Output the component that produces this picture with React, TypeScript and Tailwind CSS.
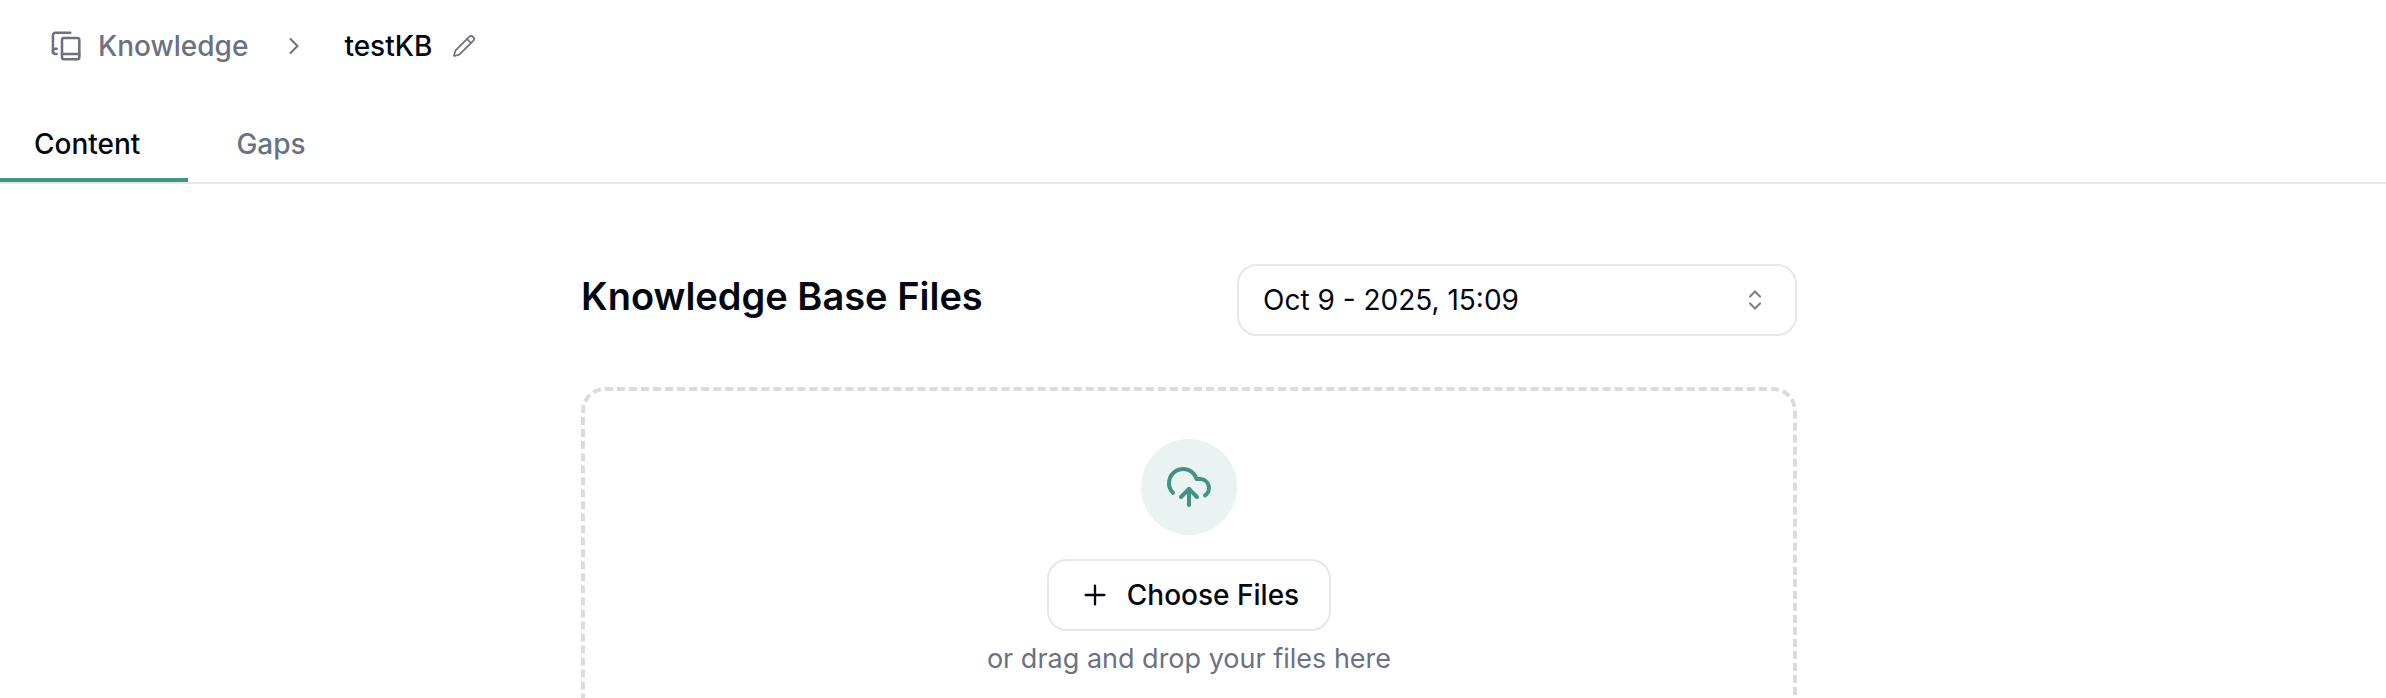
import { useState } from 'react'
import { ChevronRight, CloudUpload, Pencil, Plus } from 'lucide-react'
import clsx from 'clsx'

const TABS = ['Content', 'Gaps']
const VERSIONS = ['Oct 9 - 2025, 15:09']

function KnowledgeIcon({ className }: { className?: string }) {
  return (
    <svg
      viewBox="0 0 24 24"
      fill="none"
      stroke="currentColor"
      strokeWidth="1.9"
      strokeLinecap="round"
      strokeLinejoin="round"
      className={className}
      aria-hidden="true"
    >
      <path d="M2.2 17V4a2 2 0 0 1 2-2h11" />
      <path d="M5 14H4.2a2 2 0 1 0 0 4H5" />
      <rect x="9" y="6" width="13" height="16" rx="1.5" />
      <path d="M9 18h13" />
    </svg>
  )
}

function SortIcon({ className }: { className?: string }) {
  return (
    <svg
      viewBox="0 0 32 32"
      fill="none"
      stroke="currentColor"
      strokeWidth="2.2"
      strokeLinecap="round"
      className={className}
      aria-hidden="true"
    >
      <path d="M11 12.5 16 7.5l5 5" />
      <path d="m11 19.5 5 5 5-5" />
    </svg>
  )
}

function Breadcrumb() {
  return (
    <header className="flex items-center px-[50px] py-[26px] leading-10 font-medium">
      <a href="#knowledge" className="flex items-center gap-4 text-gray-500">
        <KnowledgeIcon className="size-8" />
        Knowledge
      </a>
      <ChevronRight className="mr-9 ml-8 size-7 text-gray-500" strokeWidth={1.75} />
      <span>testKB</span>
      <button type="button" aria-label="Rename" className="ml-5 cursor-pointer text-gray-500">
        <Pencil className="size-6" strokeWidth={1.75} />
      </button>
    </header>
  )
}

function Tabs() {
  const [active, setActive] = useState('Content')

  return (
    <div role="tablist" className="flex border-b-2 border-gray-200">
      {TABS.map((tab) => (
        <button
          key={tab}
          type="button"
          role="tab"
          aria-selected={tab === active}
          onClick={() => setActive(tab)}
          className={clsx(
            'cursor-pointer border-b-4 pt-8 pr-12 pb-[14px] leading-10 font-medium first:pl-[34px] not-first:pl-12',
            tab === active ? 'border-[#419385]' : 'border-transparent text-gray-500'
          )}
        >
          {tab}
        </button>
      ))}
    </div>
  )
}

function VersionSelect() {
  return (
    <div className="relative w-[560px]">
      <select
        aria-label="Version"
        className="h-[72px] w-full cursor-pointer appearance-none rounded-[20px] border-2 border-gray-200 bg-white px-6"
      >
        {VERSIONS.map((version) => (
          <option key={version}>{version}</option>
        ))}
      </select>
      <SortIcon className="pointer-events-none absolute top-5 right-[26px] size-8 opacity-50" />
    </div>
  )
}

function DropZone() {
  return (
    <div className="mt-[51px] flex flex-col items-center rounded-3xl border-4 border-dashed border-[#dadbdf] p-12">
      <div className="flex size-24 items-center justify-center rounded-full bg-[#ebf3f2] text-[#419385]">
        <CloudUpload className="size-12" />
      </div>
      <button
        type="button"
        className="mt-6 flex h-[72px] cursor-pointer items-center gap-4 rounded-[20px] border-2 border-gray-200 px-[30px] font-medium"
      >
        <Plus className="size-8" strokeWidth={1.75} />
        Choose Files
      </button>
      <p className="mt-2 text-[27px] leading-10 text-gray-500">or drag and drop your files here</p>
    </div>
  )
}

export default function App() {
  return (
    <div className="flex h-screen flex-col overflow-hidden bg-white font-[Inter,sans-serif] text-[28px] text-gray-950">
      <Breadcrumb />
      <Tabs />
      <main className="flex-1 pt-20 pr-2">
        <div className="mx-auto max-w-[1216px]">
          <div className="flex items-start justify-between">
            <h1 className="text-[38px] leading-16 font-semibold">Knowledge Base Files</h1>
            <VersionSelect />
          </div>
          <DropZone />
        </div>
      </main>
    </div>
  )
}
